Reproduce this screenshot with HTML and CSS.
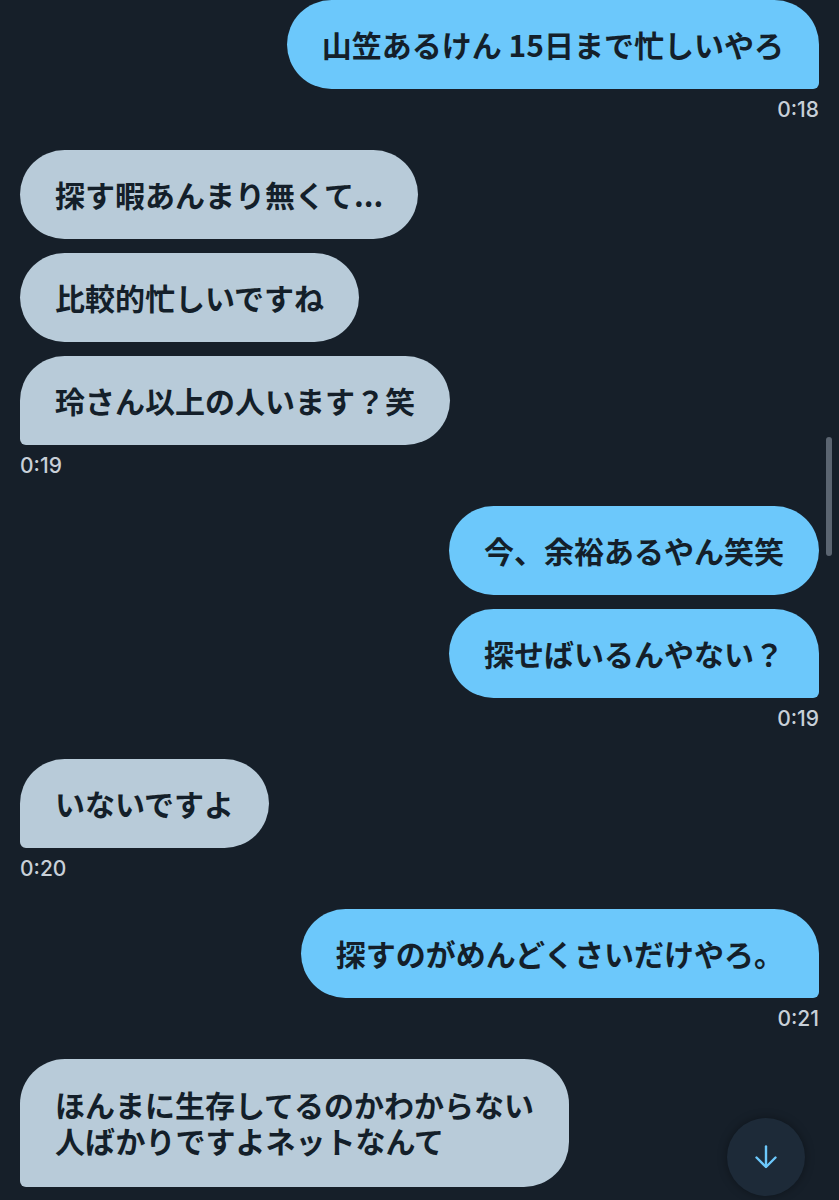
FILE: index.html
```html
<!DOCTYPE html>
<html lang="ja">
<head>
<meta charset="utf-8">
<title>DM</title>
<link rel="stylesheet" href="styles.css">
</head>
<body>
<main class="chat">
  <section class="group sent">
    <div class="bubble last">山笠あるけん 15日まで忙しいやろ</div>
    <div class="time">0:18</div>
  </section>
  <section class="group recv">
    <div class="bubble">探す暇あんまり無くて...</div>
    <div class="bubble">比較的忙しいですね</div>
    <div class="bubble last">玲さん以上の人います？笑</div>
    <div class="time">0:19</div>
  </section>
  <section class="group sent">
    <div class="bubble">今、余裕あるやん笑笑</div>
    <div class="bubble last">探せばいるんやない？</div>
    <div class="time">0:19</div>
  </section>
  <section class="group recv">
    <div class="bubble last">いないですよ</div>
    <div class="time">0:20</div>
  </section>
  <section class="group sent">
    <div class="bubble last">探すのがめんどくさいだけやろ。</div>
    <div class="time">0:21</div>
  </section>
  <section class="group recv">
    <div class="bubble last multi">ほんまに生存してるのかわからない<br>人ばかりですよネットなんて</div>
  </section>
</main>
<div class="scrollbar"></div>
<button class="jump" aria-label="最新へ">
  <svg width="26" height="26" viewBox="0 0 26 26" fill="none" stroke="#6cc8fb" stroke-width="2.4" stroke-linecap="round" stroke-linejoin="round">
    <path d="M13 2.5v20"/>
    <path d="M3.5 13.5l9.5 9.5 9.5-9.5"/>
  </svg>
</button>
</body>
</html>
```

FILE: styles.css
```css
html, body {
  margin: 0;
  padding: 0;
  background: #161f29;
  height: 1200px;
  overflow: hidden;
}

body {
  position: relative;
  font-family: "Noto Sans CJK JP", "Noto Sans", sans-serif;
}

.chat {
  display: flex;
  flex-direction: column;
  gap: 28px;
  padding: 0 20px;
}

.group {
  display: flex;
  flex-direction: column;
  gap: 14px;
}

.group.sent { align-items: flex-end; }
.group.recv { align-items: flex-start; }

.bubble {
  font-size: 30px;
  line-height: 36px;
  font-weight: 600;
  color: #141f2a;
  padding: 26px 35px 27px;
  border-radius: 45px;
}

.bubble.multi { padding: 27px 35px 29px; }

.sent .bubble { background: #6cc8fb; }
.recv .bubble { background: #b8cbd9; }

.sent .bubble.last { border-bottom-right-radius: 6px; }
.recv .bubble.last { border-bottom-left-radius: 6px; }

.time {
  font-family: Inter, "Liberation Sans", sans-serif;
  font-size: 21px;
  font-weight: 500;
  line-height: 24px;
  color: #c8d0d8;
  margin-top: -5px;
}

.scrollbar {
  position: absolute;
  left: 826px;
  top: 437px;
  width: 6px;
  height: 119px;
  border-radius: 3px;
  background: #5b6571;
}

.jump {
  position: absolute;
  left: 727px;
  top: 1118px;
  width: 78px;
  height: 78px;
  border-radius: 50%;
  border: none;
  padding: 0;
  background: #1d2a38;
  box-shadow: 0 0 10px rgba(0, 0, 0, 0.35);
  display: flex;
  align-items: center;
  justify-content: center;
}
```
